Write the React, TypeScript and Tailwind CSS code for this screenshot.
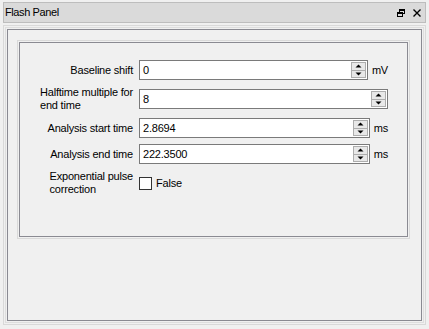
import React from "react";

function Up() {
  return (
    <svg width="7" height="4" viewBox="0 0 7 4">
      <polygon points="0.5,3.5 6.5,3.5 3.5,0.5" fill="#000" />
    </svg>
  );
}

function Down() {
  return (
    <svg width="7" height="4" viewBox="0 0 7 4">
      <polygon points="0.5,0.5 6.5,0.5 3.5,3.5" fill="#000" />
    </svg>
  );
}

function SpinBox({ value }: { value: string }) {
  return (
    <div className="flex-1 h-[20px] border border-[#7a7a7a] bg-white flex items-center">
      <span className="flex-1 pl-[3px] text-black">{value}</span>
      <div className="flex flex-col w-[15px] h-[16px] mr-px">
        <div className="flex-1 border border-[#adadad] bg-[#e8e8e8] flex items-center justify-center">
          <Up />
        </div>
        <div className="flex-1 border border-t-0 border-[#adadad] bg-[#e8e8e8] flex items-center justify-center">
          <Down />
        </div>
      </div>
    </div>
  );
}

function Row({ label, children, tall }: { label: React.ReactNode; children: React.ReactNode; tall?: boolean }) {
  return (
    <div className={`flex items-center ${tall ? "h-[26px]" : "h-[20px]"}`}>
      <div className="w-[101px] flex justify-end">
        <div className="w-fit text-left leading-[13px]">{label}</div>
      </div>
      <div className="w-[249px] ml-[6px] flex items-center gap-[4px]">{children}</div>
    </div>
  );
}

export default function App() {
  return (
    <div className="w-[429px] h-[329px] bg-[#f0f0f0] overflow-hidden text-[11px] tracking-[-0.2px] text-black font-['Liberation_Sans',Arial,sans-serif]">
      {/* dock title bar */}
      <div className="mx-[3px] mt-[2px] h-[21px] bg-[#dadada] border border-[#bdbdbd] flex items-center pl-[1px] pr-[4px]">
        <span className="flex-1 tracking-[-0.4px]">Flash Panel</span>
        <svg width="8" height="8" viewBox="0 0 8 8" className="mr-[8px]" shapeRendering="crispEdges">
          <rect x="2" y="0" width="6" height="2" fill="#000" />
          <rect x="2" y="0" width="1" height="3" fill="#000" />
          <rect x="7" y="0" width="1" height="5" fill="#000" />
          <rect x="6" y="4" width="2" height="1" fill="#000" />
          <rect x="0" y="3" width="6" height="5" fill="#dadada" />
          <rect x="0" y="3" width="6" height="2" fill="#000" />
          <rect x="0" y="3" width="1" height="5" fill="#000" />
          <rect x="5" y="3" width="1" height="5" fill="#000" />
          <rect x="0" y="7" width="6" height="1" fill="#000" />
        </svg>
        <svg width="8" height="8" viewBox="0 0 8 8">
          <path d="M0.5 0.5 L7.5 7.5 M7.5 0.5 L0.5 7.5" stroke="#000" strokeWidth="1.4" />
        </svg>
      </div>

      {/* dock frame */}
      <div className="mx-[3px] mt-[2px] h-[300px] border border-[#d9d9d9] p-px">
        <div className="h-full border border-[#dedede] p-px">
          <div className="h-full border border-[#8a8a92] pl-[9px] pt-[10px]">
            {/* group box */}
            <div className="w-[393px] h-[199px] border border-[#d9d9d9] p-px">
              <div className="h-full border border-[#8a8a92] pl-[12px] pt-[17px] flex flex-col gap-[6px]">
                <Row label="Baseline shift">
                  <SpinBox value="0" />
                  <span>mV</span>
                </Row>
                <Row tall label={<>Halftime multiple for<br />end time</>}>
                  <SpinBox value="8" />
                </Row>
                <Row label="Analysis start time">
                  <SpinBox value="2.8694" />
                  <span>ms</span>
                </Row>
                <Row label="Analysis end time">
                  <SpinBox value="222.3500" />
                  <span>ms</span>
                </Row>
                <Row tall label={<>Exponential pulse<br />correction</>}>
                  <div className="flex items-center gap-[4px]">
                    <div className="w-[13px] h-[13px] border border-[#333] bg-white" />
                    <span>False</span>
                  </div>
                </Row>
              </div>
            </div>
          </div>
        </div>
      </div>
    </div>
  );
}
